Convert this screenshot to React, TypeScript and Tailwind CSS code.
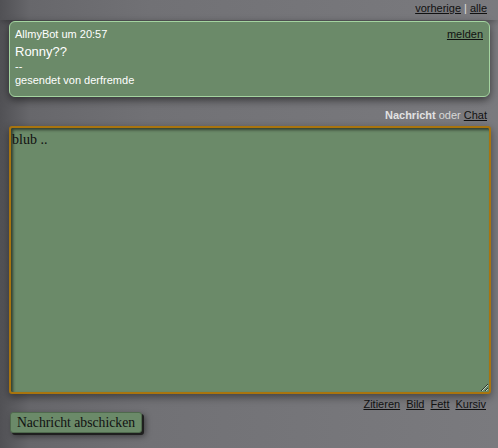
export default function App() {
  return (
    <div className="min-h-[448px] w-full bg-[linear-gradient(to_right,#515155,#67676b_6%,#717175_30%,#77777b_75%,#7a7a7e)] font-['Liberation_Sans',Arial,sans-serif] text-[11px]">
      {/* top links */}
      <div className="flex justify-end pr-[11px] pt-[1px] h-[20px] leading-[14px] shadow-[0_4px_6px_-2px_rgba(0,0,0,0.35)]">
        <a href="#" className="underline text-[#111]">vorherige</a>
        <span className="mx-[3px] text-[#ddd]">|</span>
        <a href="#" className="underline text-[#111]">alle</a>
      </div>

      <div className="px-[9px] pt-[1px]">
        {/* message card */}
        <div className="w-[481px] h-[76px] rounded-[6px] border border-[#a4d4a0] bg-[#6b8a69] pl-[5px] pr-[6px] pt-[5px] text-white shadow-[0_3px_8px_rgba(0,0,0,0.55)]">
          <div className="flex justify-between leading-[14px]">
            <span>AllmyBot um 20:57</span>
            <a href="#" className="underline text-[#111]">melden</a>
          </div>
          <div className="mt-[3px] text-[13px] leading-[16px]">Ronny??</div>
          <div className="leading-[13px]">--</div>
          <div className="leading-[14px]">gesendet von derfremde</div>
        </div>

        {/* compose header */}
        <div className="mt-[11px] flex justify-end pr-[2px] leading-[14px] text-[#e2e2e2]">
          <span className="font-bold">Nachricht</span>
          <span className="ml-[3px] text-[#d8d8d8]">oder</span>
          <a href="#" className="ml-[3px] underline text-[#111]">Chat</a>
        </div>

        {/* textarea */}
        <textarea
          defaultValue="blub .."
          className="mt-[4px] block w-[482px] h-[268px] resize rounded-[3px] border-2 border-[#a8740e] bg-[#6b8a69] pl-[1px] pr-[2px] pt-[3px] font-['Liberation_Serif','Times_New_Roman',serif] text-[14px] leading-[17px] text-[#111] shadow-[inset_2px_2px_3px_rgba(0,0,0,0.55),0_3px_8px_rgba(0,0,0,0.45)] outline-none"
        />

        {/* formatting links */}
        <div className="mt-[3px] flex justify-end gap-[6px] pr-[3px] leading-[14px]">
          <a href="#" className="underline text-[#111]">Zitieren</a>
          <a href="#" className="underline text-[#111]">Bild</a>
          <a href="#" className="underline text-[#111]">Fett</a>
          <a href="#" className="underline text-[#111]">Kursiv</a>
        </div>

        {/* submit */}
        <button className="mt-[1px] ml-[1px] h-[21px] w-[132px] rounded-[3px] border border-[#4f6a4d] bg-[#6b8a69] font-['Liberation_Serif','Times_New_Roman',serif] text-[13.7px] leading-[18px] text-[#111] shadow-[2px_2px_0_#1f1f1f,3px_3px_6px_rgba(0,0,0,0.5)]">
          Nachricht abschicken
        </button>
      </div>
    </div>
  );
}
